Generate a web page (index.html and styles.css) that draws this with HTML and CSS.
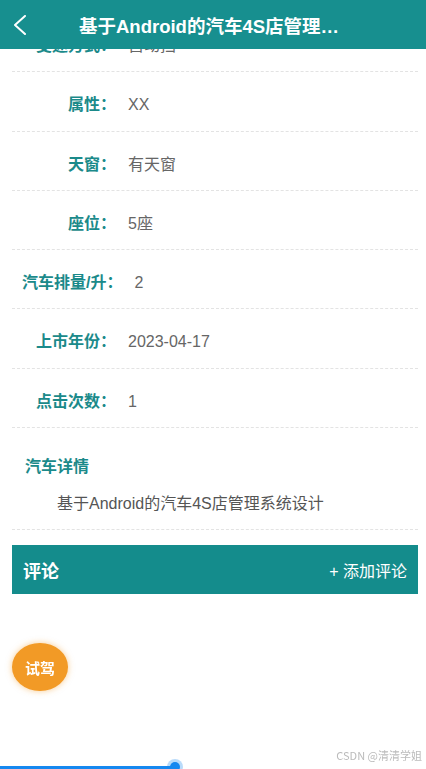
FILE: index.html
```html
<!DOCTYPE html>
<html>
  <head>
    <meta charset="utf-8">
    <title>汽车详情</title>
    <link rel="stylesheet" href="styles.css">
  </head>
  <body>
    <header class="topbar">
      <a class="back" href="#">
        <svg width="14" height="20" viewBox="0 0 14 20">
          <polyline points="12,1 2,10 12,19" fill="none" stroke="#fff" stroke-width="2" stroke-linecap="round" stroke-linejoin="round"/>
        </svg>
      </a>
      <h1 class="title">基于Android的汽车4S店管理系统设计</h1>
    </header>

    <main class="page">
      <ul class="info-list">
        <li class="info-row"><span class="info-label">变速方式：</span><span class="info-value">自动挡</span></li>
        <li class="info-row"><span class="info-label">属性：</span><span class="info-value">XX</span></li>
        <li class="info-row"><span class="info-label">天窗：</span><span class="info-value">有天窗</span></li>
        <li class="info-row"><span class="info-label">座位：</span><span class="info-value">5座</span></li>
        <li class="info-row"><span class="info-label">汽车排量/升：</span><span class="info-value">2</span></li>
        <li class="info-row"><span class="info-label">上市年份：</span><span class="info-value">2023-04-17</span></li>
        <li class="info-row"><span class="info-label">点击次数：</span><span class="info-value">1</span></li>
      </ul>

      <section class="detail">
        <h3>汽车详情</h3>
        <p>基于Android的汽车4S店管理系统设计</p>
      </section>

      <div class="comment-bar">
        <h3>评论</h3>
        <span class="add-comment">+ 添加评论</span>
      </div>
    </main>

    <button class="test-drive">试驾</button>

    <div class="player-bar"><span class="knob"></span></div>
    <span class="watermark">CSDN @清清学姐</span>
  </body>
</html>
```

FILE: styles.css
```css
body {
  margin: 0;
  background-color: #fff;
  font-family: "Liberation Sans", "Noto Sans CJK SC", sans-serif;
  font-size: 16px;
  color: #666;
}

.topbar {
  position: fixed;
  top: 0;
  left: 0;
  right: 0;
  height: 49px;
  background-color: #178f8f;
  display: grid;
  grid-template-columns: 79px 1fr 78px;
  align-items: center;
  z-index: 10;
}

.back {
  display: flex;
  align-items: center;
  padding-left: 13px;
  height: 49px;
}

.title {
  margin: 0;
  color: #fff;
  font-size: 18.5px;
  font-weight: bold;
  white-space: nowrap;
  overflow: hidden;
  text-overflow: ellipsis;
  text-align: center;
}

.page {
  padding-top: 13px;
  margin: 0 8px 0 12px;
}

.info-list {
  list-style: none;
  margin: 0;
  padding: 0;
}

.info-row {
  display: flex;
  padding: 21px 0 14px 10px;
  line-height: 23.3px;
  border-bottom: 1px dashed #e3e3e3;
}

.info-label {
  min-width: 94px;
  text-align: right;
  font-weight: bold;
  color: #1b8a8a;
}

.info-value {
  margin-left: 12px;
  color: #666;
}

.detail {
  padding: 27px 0 13px 13px;
  border-bottom: 1px dashed #e3e3e3;
}

.detail h3 {
  margin: 0;
  font-size: 16px;
  line-height: 24px;
  color: #1b8a8a;
}

.detail p {
  margin: 13px 0 0;
  line-height: 24px;
  text-indent: 2em;
  color: #555;
}

.comment-bar {
  margin-top: 15px;
  height: 49px;
  background-color: #148c8c;
  display: flex;
  align-items: center;
  justify-content: space-between;
  padding: 0 11px;
  color: #fff;
}

.comment-bar h3 {
  margin: 0;
  font-size: 18px;
}

.add-comment {
  font-size: 16px;
}

.test-drive {
  position: fixed;
  left: 12px;
  top: 643px;
  width: 56px;
  height: 48px;
  border: none;
  border-radius: 50%;
  background-color: #f29a26;
  box-shadow: 0 0 6px rgba(242, 154, 38, 0.5);
  color: #fff;
  font-family: "Noto Sans CJK SC", sans-serif;
  font-size: 15px;
  font-weight: bold;
  padding: 0;
}

.player-bar {
  position: fixed;
  left: 0;
  bottom: 0;
  width: 175px;
  height: 3px;
  background-color: #1688f0;
}

.knob {
  position: absolute;
  right: -5px;
  top: -4px;
  width: 10px;
  height: 10px;
  border-radius: 50%;
  background-color: #1688f0;
  box-shadow: 0 0 0 3px rgba(22, 136, 240, 0.3);
}

.watermark {
  position: fixed;
  right: 4px;
  bottom: 6px;
  font-size: 11px;
  color: #bbb;
  font-family: "Noto Sans CJK SC", sans-serif;
}
```
